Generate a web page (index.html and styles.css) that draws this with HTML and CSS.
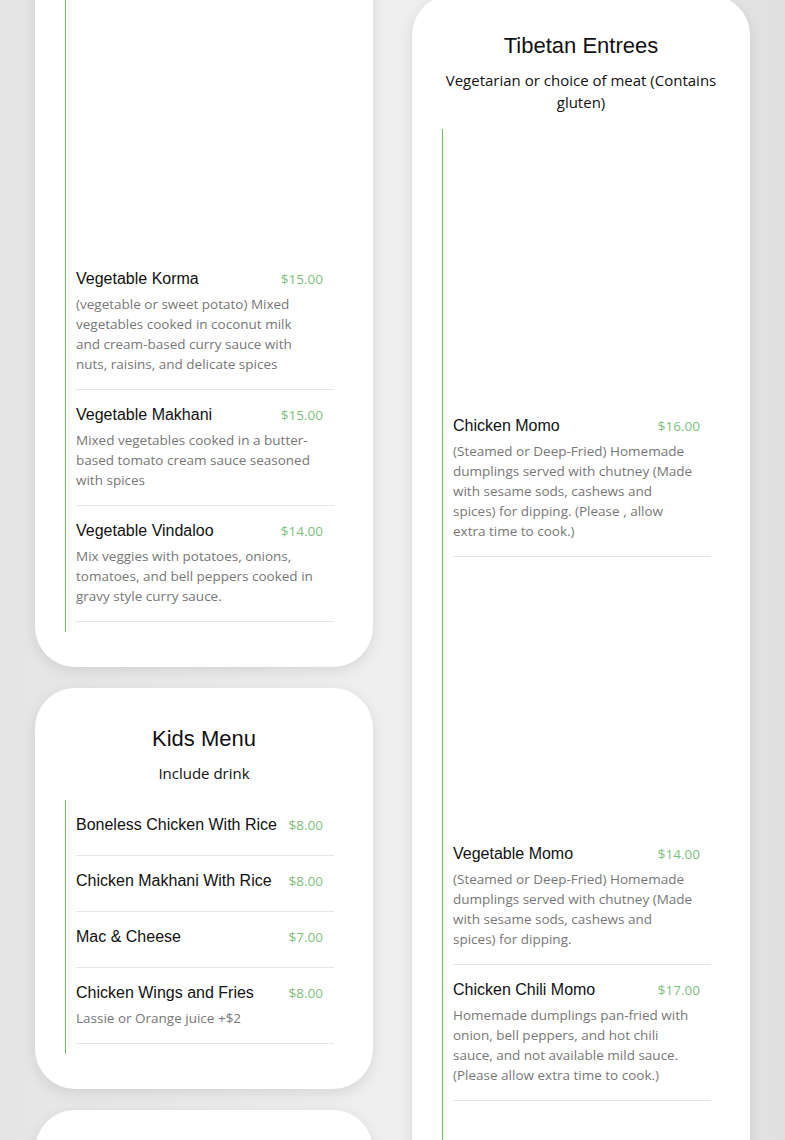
FILE: index.html
```html
<!DOCTYPE html>
<html lang="en">
<head>
    <meta charset="UTF-8">
    <meta name="viewport" content="width=device-width, initial-scale=1.0">
    <title>Menu</title>
    <link rel="stylesheet" href="styles.css">
</head>
<body>
    <div class="menu">
        <div class="column column-left">
            <section class="card card-cont">
                <ul class="items">
                    <li class="item">
                        <div class="item-img"></div>
                        <div class="item-head">
                            <span class="item-name">Vegetable Korma</span>
                            <span class="item-price">$15.00</span>
                        </div>
                        <p class="item-desc">(vegetable or sweet potato) Mixed vegetables cooked in coconut milk and cream-based curry sauce with nuts, raisins, and delicate spices</p>
                    </li>
                    <li class="item">
                        <div class="item-head">
                            <span class="item-name">Vegetable Makhani</span>
                            <span class="item-price">$15.00</span>
                        </div>
                        <p class="item-desc">Mixed vegetables cooked in a butter-based tomato cream sauce seasoned with spices</p>
                    </li>
                    <li class="item">
                        <div class="item-head">
                            <span class="item-name">Vegetable Vindaloo</span>
                            <span class="item-price">$14.00</span>
                        </div>
                        <p class="item-desc">Mix veggies with potatoes, onions, tomatoes, and bell peppers cooked in gravy style curry sauce.</p>
                    </li>
                </ul>
            </section>

            <section class="card">
                <h2 class="card-title">Kids Menu</h2>
                <p class="card-sub">Include drink</p>
                <ul class="items">
                    <li class="item">
                        <div class="item-head">
                            <span class="item-name">Boneless Chicken With Rice</span>
                            <span class="item-price">$8.00</span>
                        </div>
                    </li>
                    <li class="item">
                        <div class="item-head">
                            <span class="item-name">Chicken Makhani With Rice</span>
                            <span class="item-price">$8.00</span>
                        </div>
                    </li>
                    <li class="item">
                        <div class="item-head">
                            <span class="item-name">Mac &amp; Cheese</span>
                            <span class="item-price">$7.00</span>
                        </div>
                    </li>
                    <li class="item">
                        <div class="item-head">
                            <span class="item-name">Chicken Wings and Fries</span>
                            <span class="item-price">$8.00</span>
                        </div>
                        <p class="item-desc">Lassie or Orange juice +$2</p>
                    </li>
                </ul>
            </section>

            <section class="card card-next"></section>
        </div>

        <div class="column column-right">
            <section class="card">
                <h2 class="card-title">Tibetan Entrees</h2>
                <p class="card-sub">Vegetarian or choice of meat (Contains gluten)</p>
                <ul class="items">
                    <li class="item">
                        <div class="item-img"></div>
                        <div class="item-head">
                            <span class="item-name">Chicken Momo</span>
                            <span class="item-price">$16.00</span>
                        </div>
                        <p class="item-desc">(Steamed or Deep-Fried) Homemade dumplings served with chutney (Made with sesame sods, cashews and spices) for dipping. (Please , allow extra time to cook.)</p>
                    </li>
                    <li class="item">
                        <div class="item-img"></div>
                        <div class="item-head">
                            <span class="item-name">Vegetable Momo</span>
                            <span class="item-price">$14.00</span>
                        </div>
                        <p class="item-desc">(Steamed or Deep-Fried) Homemade dumplings served with chutney (Made with sesame sods, cashews and spices) for dipping.</p>
                    </li>
                    <li class="item">
                        <div class="item-head">
                            <span class="item-name">Chicken Chili Momo</span>
                            <span class="item-price">$17.00</span>
                        </div>
                        <p class="item-desc">Homemade dumplings pan-fried with onion, bell peppers, and hot chili sauce, and not available mild sauce. (Please allow extra time to cook.)</p>
                    </li>
                    <li class="item item-empty"></li>
                </ul>
            </section>
        </div>
    </div>
</body>
</html>
```

FILE: styles.css
```css
body {
    margin: 0;
    padding: 0;
    font-family: "Open Sans", Lato, sans-serif;
    color: #111;
    background: linear-gradient(to right, #e5e5e5 0%, #efefef 48%, #ececec 70%, #e0e0e0 100%);
    height: 1140px;
    overflow: hidden;
}

.menu {
    display: grid;
    grid-template-columns: 338px 338px;
    column-gap: 39px;
    padding: 0 35px;
    align-items: start;
}

.column {
    display: flex;
    flex-direction: column;
    gap: 21px;
}

.column-left {
    margin-top: -60px;
}

.column-right {
    margin-top: -5px;
}

.card {
    background: #fff;
    border-radius: 40px;
    padding: 38px 30px 35px;
    box-shadow: 0 4px 14px rgba(0, 0, 0, 0.1);
}

.card-cont {
    padding-top: 42px;
}

.card-next {
    height: 200px;
}

.card-title {
    margin: 0;
    font-family: "Liberation Sans", Arial, sans-serif;
    font-size: 22px;
    font-weight: normal;
    line-height: 26px;
    text-align: center;
}

.card-sub {
    margin: 10px 0 16px;
    font-size: 15px;
    line-height: 22px;
    text-align: center;
}

.items {
    list-style: none;
    margin: 0 9px 0 0;
    padding: 0 0 10px 10px;
    border-left: 1px solid #6cbf5c;
}

.item {
    padding: 15px 0;
    border-bottom: 1px solid #e6e6e6;
}

.item-empty {
    height: 300px;
    border-bottom: none;
}

.item-img {
    height: 256px;
    margin-bottom: 16px;
}

.item-head {
    display: flex;
    justify-content: space-between;
    align-items: center;
    padding-right: 11px;
    margin-bottom: 6px;
}

.item-name {
    font-family: "Liberation Sans", Arial, sans-serif;
    font-size: 16px;
    line-height: 19px;
}

.item-price {
    font-size: 13.5px;
    color: #7cbf7c;
}

.item-desc {
    margin: 0;
    max-width: 240px;
    font-size: 13.5px;
    line-height: 20px;
    color: #777;
}
```
